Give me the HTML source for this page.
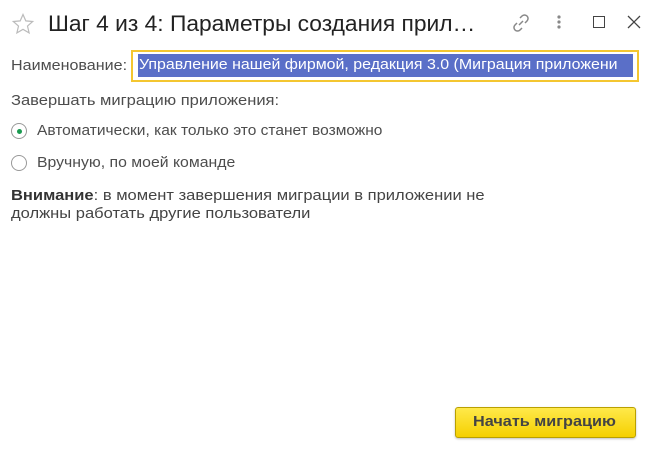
<!DOCTYPE html>
<html><head><meta charset="utf-8"><style>
body{margin:0;width:658px;height:451px;background:#fff;font-family:"Liberation Sans",Arial,sans-serif;color:#333;position:relative;overflow:hidden}
.a{position:absolute;white-space:nowrap}
.t{font-size:14.5px;color:#4d4d4d;transform-origin:0 0}
</style></head><body>
<svg class="a" style="left:11px;top:12px" width="24" height="24" viewBox="0 0 24 24"><path d="M12 2.5l2.8 6.4 6.9.6-5.2 4.6 1.6 6.8L12 17.3 5.9 20.9l1.6-6.8L2.3 9.5l6.9-.6z" fill="none" stroke="#bbb" stroke-width="1.2"/></svg>
<div class="a" style="left:48px;top:11px;font-size:22px;color:#222;transform:scaleX(1.035);transform-origin:0 0">Шаг 4 из 4: Параметры создания прил…</div>
<svg class="a" style="left:510px;top:12px" width="22" height="22" viewBox="0 0 22 22" fill="none" stroke="#888" stroke-width="1.5"><path d="M9 13l4-4"/><path d="M10 6l2-2a3 3 0 0 1 5 5l-2 2"/><path d="M12 16l-2 2a3 3 0 0 1-5-5l2-2"/></svg>
<svg class="a" style="left:556px;top:14px" width="6" height="18"><circle cx="3" cy="3" r="1.6" fill="#888"/><circle cx="3" cy="8" r="1.6" fill="#888"/><circle cx="3" cy="13" r="1.6" fill="#888"/></svg>
<div class="a" style="left:593px;top:16px;width:10px;height:10px;border:1.3px solid #444"></div>
<svg class="a" style="left:627px;top:15px" width="14" height="14" stroke="#444" stroke-width="1.3"><path d="M1 1l12 12M13 1L1 13"/></svg>
<div class="a t" style="left:11px;top:58px;transform:scaleX(1.11)">Наименование:</div>
<div class="a" style="left:131px;top:50px;width:504px;height:28px;border:2px solid #f4c630"></div>
<div class="a" style="left:138px;top:54px;width:495px;height:23px;background:#5a6fc8;overflow:hidden"><span style="font-size:14.5px;color:#fff;position:absolute;top:3px;left:1px;transform:scaleX(1.1);transform-origin:0 0">Управление нашей фирмой, редакция 3.0 (Миграция приложени</span></div>
<div class="a t" style="left:11px;top:93px;transform:scaleX(1.14)">Завершать миграцию приложения:</div>
<div class="a" style="left:11px;top:123px;width:16px;height:16px;border:1px solid #999;border-radius:50%;box-sizing:border-box"></div>
<div class="a" style="left:17px;top:129px;width:5px;height:5px;background:#1a9a50;border-radius:50%"></div>
<div class="a t" style="left:37px;top:123px;transform:scaleX(1.07)">Автоматически, как только это станет возможно</div>
<div class="a" style="left:11px;top:155px;width:16px;height:16px;border:1px solid #999;border-radius:50%;box-sizing:border-box"></div>
<div class="a t" style="left:37px;top:155px;transform:scaleX(1.09)">Вручную, по моей команде</div>
<div class="a t" style="left:11px;top:187px;line-height:18px;color:#444;transform:scaleX(1.14)"><b style="color:#333">Внимание</b>: в момент завершения миграции в приложении не<br>должны работать другие пользователи</div>
<div class="a" style="left:455px;top:407px;width:181px;height:31px;box-sizing:border-box;border:1px solid #b9a000;border-radius:3px;background:linear-gradient(#ffe94a,#f5d000);box-shadow:0 1px 2px rgba(0,0,0,.25)"><span style="position:absolute;left:17px;top:6px;font-size:14.5px;font-weight:bold;color:#444;transform:scaleX(1.12);transform-origin:0 0">Начать миграцию</span></div>
</body></html>
